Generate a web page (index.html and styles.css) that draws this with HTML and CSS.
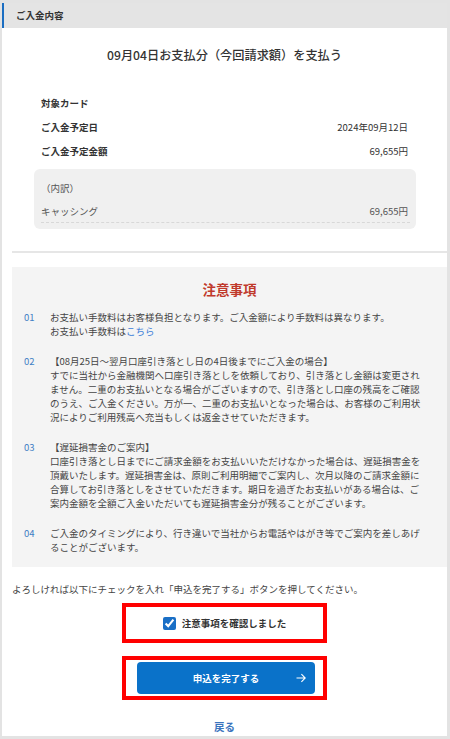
FILE: index.html
```html
<!DOCTYPE html>
<html lang="ja">
<head>
  <meta charset="UTF-8" />
  <meta name="viewport" content="width=device-width, initial-scale=1.0" />
  <title>ご入金内容</title>
  <link rel="stylesheet" href="styles.css">
</head>
<body>
  <div class="pagina">
    <div class="barra">ご入金内容</div>

    <h2 class="titulo-pago">09月04日お支払分（今回請求額）を支払う</h2>

    <div class="resumen">
      <div class="fila"><span class="etiqueta">対象カード</span></div>
      <div class="fila"><span class="etiqueta">ご入金予定日</span><span>2024年09月12日</span></div>
      <div class="fila"><span class="etiqueta">ご入金予定金額</span><span>69,655円</span></div>

      <!-- detalle del monto -->
      <div class="desglose">
        <div class="desglose-titulo">（内訳）</div>
        <div class="desglose-fila"><span>キャッシング</span><span>69,655円</span></div>
      </div>
    </div>

    <hr class="separador">

    <section class="aviso">
      <h3>注意事項</h3>
      <ol>
        <li><span class="num">01</span><p>お支払い手数料はお客様負担となります。ご入金額により手数料は異なります。<br>お支払い手数料は<a href="#">こちら</a></p></li>
        <li><span class="num">02</span><p>【08月25日～翌月口座引き落とし日の4日後までにご入金の場合】<br>すでに当社から金融機関へ口座引き落としを依頼しており、引き落とし金額は変更されません。二重のお支払いとなる場合がございますので、引き落とし口座の残高をご確認のうえ、ご入金ください。万が一、二重のお支払いとなった場合は、お客様のご利用状況によりご利用残高へ充当もしくは返金させていただきます。</p></li>
        <li><span class="num">03</span><p>【遅延損害金のご案内】<br>口座引き落とし日までにご請求金額をお支払いいただけなかった場合は、遅延損害金を頂戴いたします。遅延損害金は、原則ご利用明細でご案内し、次月以降のご請求金額に合算してお引き落としをさせていただきます。期日を過ぎたお支払いがある場合は、ご案内金額を全額ご入金いただいても遅延損害金分が残ることがございます。</p></li>
        <li><span class="num">04</span><p>ご入金のタイミングにより、行き違いで当社からお電話やはがき等でご案内を差しあげることがございます。</p></li>
      </ol>
    </section>

    <p class="instruccion">よろしければ以下にチェックを入れ「申込を完了する」ボタンを押してください。</p>

    <div class="marco marco-check">
      <label class="check"><input type="checkbox" checked> 注意事項を確認しました</label>
    </div>

    <div class="marco marco-boton">
      <button class="boton">
        <span></span>
        <span>申込を完了する</span>
        <svg width="10" height="10" viewBox="0 0 10 10"><path d="M0.5 5 H9.2 M5.4 1.2 L9.2 5 L5.4 8.8" fill="none" stroke="#fff" stroke-width="1.1"/></svg>
      </button>
    </div>

    <a class="volver" href="#">戻る</a>
  </div>
</body>
</html>
```

FILE: styles.css
```css
body {
  margin: 0;
  background-color: #e3e3e3;
  font-family: "Noto Sans CJK JP", "Noto Sans", sans-serif;
  font-size: 9.5px;
  color: #333;
}

.pagina {
  margin: 3px 3px 3px 2px;
  background-color: #fff;
  min-height: 733px;
  overflow: hidden;
}

.barra {
  background-color: #e4e4e4;
  border-left: 2px solid #1b6ec2;
  height: 25px;
  line-height: 25px;
  padding-left: 12px;
  font-weight: bold;
}

.titulo-pago {
  margin: 17px 0 0;
  font-size: 12.2px;
  line-height: 20px;
  font-weight: 500;
  text-align: center;
}

.resumen {
  margin: 26px 31px 0 32px;
}

.fila {
  display: flex;
  justify-content: space-between;
  line-height: 24px;
  padding: 0 8px 0 7px;
}

.etiqueta {
  font-weight: bold;
}

.desglose {
  background-color: #f0f0f0;
  border-radius: 6px;
  margin-top: 6px;
  padding: 7px 6px 6px 7px;
  color: #555;
}

.desglose-titulo {
  line-height: 24px;
}

.desglose-fila {
  display: flex;
  justify-content: space-between;
  line-height: 22px;
  padding-right: 2px;
  border-bottom: 1px dashed #d8d8d8;
}

.separador {
  margin: 22px 0 0 10px;
  border: 0;
  border-top: 2px solid #e6e6e6;
  height: 0;
}

.aviso {
  margin: 14px 0 0 10px;
  background-color: #f4f4f4;
  padding: 12px 0 13px;
}

.aviso h3 {
  margin: 0 0 11px;
  font-size: 13.5px;
  line-height: 20px;
  color: #c0392b;
  text-align: center;
}

.aviso ol {
  list-style: none;
  margin: 0;
  padding: 0 22px 0 12px;
}

.aviso li {
  display: grid;
  grid-template-columns: 26px 1fr;
  line-height: 14px;
  color: #444;
}

.aviso li + li {
  margin-top: 16px;
}

.aviso p {
  margin: 0;
}

.num {
  color: #3f7fc4;
}

.aviso a {
  color: #3b7dd8;
  text-decoration: none;
}

.instruccion {
  margin: 15px 0 0 10px;
  line-height: 14px;
  color: #444;
}

.marco {
  width: 197px;
  margin: 0 auto;
  border: 4px solid #ff0000;
}

.marco-check {
  margin-top: 7px;
  height: 32px;
  display: flex;
  align-items: center;
  justify-content: center;
}

.check {
  display: flex;
  align-items: center;
  gap: 6px;
  font-weight: bold;
}

.check input {
  width: 13px;
  height: 13px;
  margin: 0;
  accent-color: #1a6fc6;
}

.marco-boton {
  margin-top: 13px;
  padding: 2px 8px 2px 11px;
  width: 178px;
}

.boton {
  display: grid;
  grid-template-columns: 1fr auto 1fr;
  align-items: center;
  width: 178px;
  height: 32px;
  padding: 0 9px;
  border: 0;
  border-radius: 4px;
  background-color: #0a72c9;
  color: #fff;
  font-family: inherit;
  font-size: 9.5px;
  font-weight: bold;
}

.boton svg {
  justify-self: end;
}

.volver {
  display: block;
  margin-top: 20px;
  text-align: center;
  line-height: 14px;
  font-size: 10.5px;
  font-weight: bold;
  color: #3b74bd;
  text-decoration: none;
}
```
